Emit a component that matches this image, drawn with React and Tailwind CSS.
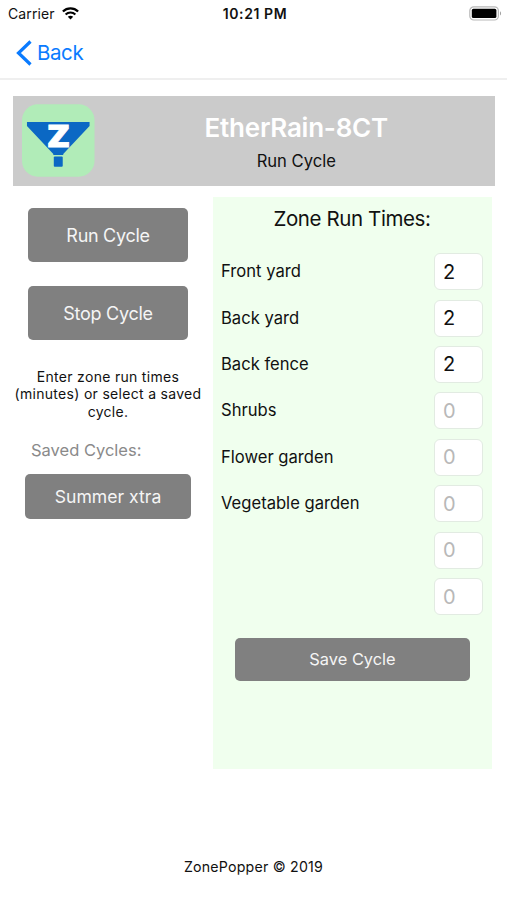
import React, { useState } from "react";

const ZONES = [
  { name: "Front yard", minutes: "2" },
  { name: "Back yard", minutes: "2" },
  { name: "Back fence", minutes: "2" },
  { name: "Shrubs", minutes: "" },
  { name: "Flower garden", minutes: "" },
  { name: "Vegetable garden", minutes: "" },
  { name: "", minutes: "" },
  { name: "", minutes: "" },
];

const WifiIcon = () => (
  <svg className="w-[17px] h-[13px]" viewBox="0 0 17 13" fill="none">
    <path d="M0.9 4.5C5.2 0.4 11.8 0.4 16.1 4.5" stroke="#000" strokeWidth="2.3" />
    <path d="M3.6 7.4C6.4 4.8 10.6 4.8 13.4 7.4" stroke="#000" strokeWidth="2.1" />
    <path d="M8.5 12.6L5.8 9.8C7.4 8.3 9.6 8.3 11.2 9.8Z" fill="#000" />
  </svg>
);

const BatteryIcon = () => (
  <svg className="w-[33px] h-[15px]" viewBox="0 0 33 15" fill="none">
    <rect x="0.8" y="0.8" width="28.6" height="13.2" rx="4" stroke="#b8b8b8" strokeWidth="1.2" />
    <rect x="2.8" y="2.8" width="24.6" height="9.2" rx="1.6" fill="#000" />
    <path d="M31 5.2C32.4 5.8 32.4 9 31 9.6Z" fill="#a0a0a0" />
  </svg>
);

const Logo = () => (
  <svg className="mb-[2px] w-[73px] h-[73px]" viewBox="0 0 73 73">
    <rect width="73" height="73" rx="16" fill="#b1ecb8" />
    <path d="M5 18H68V22L41.5 50V51H31.5V50L5 22Z" fill="#0b68c4" />
    <rect x="32" y="52.5" width="9" height="10.5" rx="1" fill="#0b68c4" />
    <text
      x="36.6"
      y="43.2"
      textAnchor="middle"
      className="font-['Open_Sans',sans-serif] font-extrabold text-[29.5px]"
      fill="#fff"
      stroke="#fff"
      strokeWidth="0.8"
      textLength="22"
      lengthAdjust="spacingAndGlyphs"
    >
      Z
    </text>
  </svg>
);

const Button = ({ className, children }) => (
  <button
    className={`flex items-center justify-center rounded-[5px] bg-[#808080] text-[#f5f5f5] ${className}`}
  >
    {children}
  </button>
);

const ZoneRow = ({ name, minutes, onChange }) => (
  <label className="flex h-[46.45px] items-center justify-between">
    <span className="text-[16.6px] text-[#111]">{name}</span>
    <input
      value={minutes}
      onChange={(e) => onChange(e.target.value)}
      placeholder="0"
      className="h-[37px] w-[49px] rounded-[6px] border border-[#e2ebe2] bg-white pl-2 text-[20px] text-[#111] outline-none placeholder:text-[#b8b8b8]"
    />
  </label>
);

export default function App() {
  const [zones, setZones] = useState(ZONES);

  const setMinutes = (index, minutes) => {
    setZones(zones.map((z, i) => (i === index ? { ...z, minutes } : z)));
  };

  return (
    <div className="flex h-[900px] w-[507px] flex-col overflow-hidden bg-white font-['Inter',sans-serif] text-[#111]">
      {/* Status bar */}
      <div className="grid h-[27px] grid-cols-3 items-center pl-[8px] pr-[5px]">
        <div className="flex items-center gap-[7px]">
          <span className="text-[14px] tracking-[0.1px]">Carrier</span>
          <WifiIcon />
        </div>
        <span className="text-center text-[14px] font-semibold tracking-[0.6px]">10:21 PM</span>
        <div className="flex justify-end">
          <BatteryIcon />
        </div>
      </div>

      {/* Nav bar */}
      <div className="flex h-[53px] items-center border-b-2 border-[#efefef] pl-4">
        <button className="flex items-center gap-[5px] text-[#0a7bff]">
          <svg className="h-[26px] w-[16px]" viewBox="0 0 16 26" fill="none">
            <path d="M14.5 1.5L2.5 13L14.5 24.5" stroke="#0a7bff" strokeWidth="3.2" />
          </svg>
          <span className="pt-px text-[20.5px] tracking-[-0.4px]">Back</span>
        </button>
      </div>

      {/* Controller header */}
      <div className="mx-[13px] mt-4 flex h-[90px] w-[482px] items-center bg-[#cbcbcb] pl-[9px]">
        <Logo />
        <div className="flex w-[403px] flex-col items-center pl-[3px]">
          <h1 className="mt-[2px] text-[26px] leading-[32px] font-semibold tracking-[-0.25px] text-white">
            EtherRain-8CT
          </h1>
          <p className="mt-[5px] text-[16.6px] leading-[24px]">Run Cycle</p>
        </div>
      </div>

      <div className="mt-[11px] flex gap-[10px] pl-[13px]">
        {/* Cycle actions */}
        <div className="flex w-[190px] flex-col items-center">
          <Button className="mt-[11px] h-[54px] w-[160px] text-[18px] tracking-[-0.3px]">Run Cycle</Button>
          <Button className="mt-[24px] h-[54px] w-[160px] text-[18px] tracking-[-0.25px]">Stop Cycle</Button>
          <p className="mt-[28px] text-center text-[14px] leading-[17.3px] tracking-[0.3px]">
            Enter zone run times
            <br />
            (minutes) or select a saved
            <br />
            cycle.
          </p>
          <p className="mt-[18px] self-start pl-[18px] text-[16.5px] leading-[24px] text-[#8a8a8a]">
            Saved Cycles:
          </p>
          <Button className="mt-[12px] h-[45px] w-[166px] pt-px text-[17.6px]">Summer xtra</Button>
        </div>

        {/* Zones */}
        <div className="flex h-[572px] w-[279px] flex-col bg-[#f0ffee] pr-[9px] pl-[8px]">
          <h2 className="mt-[8px] text-center text-[20.5px] leading-[28px] tracking-[-0.4px]">
            Zone Run Times:
          </h2>
          <div className="mt-[15.4px]">
            {zones.map((zone, i) => (
              <ZoneRow
                key={i}
                name={zone.name}
                minutes={zone.minutes}
                onChange={(value) => setMinutes(i, value)}
              />
            ))}
          </div>
          <Button className="mt-[18px] ml-[14px] h-[43px] w-[235px] text-[16.4px]">Save Cycle</Button>
        </div>
      </div>

      <footer className="mt-[88px] text-center text-[14.2px] leading-[20px] tracking-[0.2px]">
        ZonePopper © 2019
      </footer>
    </div>
  );
}
